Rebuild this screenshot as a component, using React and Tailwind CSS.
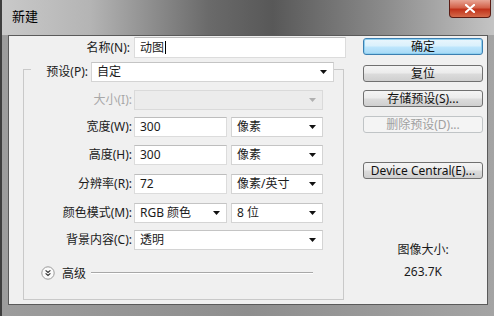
import React from 'react';

const Arrow = ({ disabled }) => (
  <svg width="7" height="4" viewBox="0 0 7 4" className="shrink-0">
    <path d="M0 0h7L3.5 4z" fill={disabled ? '#b0b0b0' : '#111'} />
  </svg>
);

function Select({ value, className = '', disabled }) {
  return (
    <div
      className={`h-[20px] flex items-center justify-between pl-[5px] pr-[6px] border ${
        disabled ? 'bg-[#ececec] border-[#dadada]' : 'bg-white border-[#d4d4d4] border-t-[#c4c4c4]'
      } ${className}`}
    >
      <span>{value}</span>
      <Arrow disabled={disabled} />
    </div>
  );
}

function Input({ value, className = '', caret }) {
  return (
    <div
      className={`h-[20px] flex items-center pl-[5px] bg-white border border-[#dcdcdc] border-t-[#bdbdbd] ${className}`}
    >
      <span>{value}</span>
      {caret && <span className="w-px h-[13px] bg-black ml-[1px]" />}
    </div>
  );
}

function Row({ label, disabled, children, className = '' }) {
  return (
    <div className={`flex items-center h-[20px] ${className}`}>
      <div className={`w-[110px] pr-[2px] text-right ${disabled ? 'text-[#a8a8a8]' : ''}`}>{label}</div>
      <div className="flex items-center gap-[4px]">{children}</div>
    </div>
  );
}

function Button({ children, primary, disabled, className = '' }) {
  let tone =
    'border-[#707070] bg-[linear-gradient(to_bottom,#f4f4f4_0%,#ebebeb_48%,#dcdcdc_52%,#cfcfcf_100%)] text-[#111]';
  if (primary)
    tone =
      'border-[#3c7fb1] bg-[linear-gradient(to_bottom,#eaf6fd_0%,#d9f0fc_48%,#bee6fd_52%,#a7d9f5_100%)] text-[#111] shadow-[inset_0_0_0_1px_#8fd0f0]';
  if (disabled) tone = 'border-[#c0c4c6] bg-[#f4f4f4] text-[#a0a0a0]';
  return (
    <div className={`h-[17px] w-[120px] rounded-[3px] border flex items-center justify-center ${tone} ${className}`}>
      {children}
    </div>
  );
}

export default function App() {
  return (
    <div className="w-[494px] h-[316px] flex flex-col text-[12px] leading-none text-[#1b1b1b] font-['Noto_Sans','Noto_Sans_CJK_SC',sans-serif] bg-[linear-gradient(to_right,#9c9c9c_0%,#8e8e8e_50%,#a4a4a4_100%)] border-l-2 border-[#3e3e3e] overflow-hidden">
      {/* Title bar */}
      <div className="h-[35px] shrink-0 flex items-start justify-between bg-[linear-gradient(to_right,#c9c9c9_0%,#b4b4b4_18%,#6a6a6a_42%,#585858_55%,#8c8c8c_78%,#c4c4c4_100%)]">
        <span className="mt-[9px] ml-[10px] text-[13px] text-black font-['Noto_Sans_CJK_SC',sans-serif]">新建</span>
        <div className="w-[42px] h-[18px] mr-[3px] rounded-b-[4px] border border-t-0 border-[#5a1c14] bg-[linear-gradient(to_bottom,#e8a595_0%,#d3624a_45%,#c0321a_55%,#d46a4a_100%)] flex items-center justify-center">
          <svg width="10" height="9" viewBox="0 0 10 9">
            <path d="M1 1l8 7M9 1L1 8" stroke="#fff" strokeWidth="2.2" strokeLinecap="round" />
          </svg>
        </div>
      </div>

      {/* Body */}
      <div className="flex-1 mx-[6px] mb-[11px] border border-[#5a5a5a] bg-[#f0f0f0] flex">
        {/* Left column */}
        <div className="w-[354px] flex flex-col">
          <div className="flex items-center mt-[1px] h-[21px]">
            <div className="w-[125px] pr-[4px] text-right">名称(N):</div>
            <Input value="动图" caret className="w-[212px] h-[21px]" />
          </div>

          {/* Preset group */}
          <div className="ml-[14px] mt-[11px] w-[321px] h-[231px] border border-[#c9c9c9] flex flex-col">
            <div className="-mt-[8px] ml-[7px] w-[303px] flex items-center h-[20px] bg-[#f0f0f0]">
              <div className="flex-1 text-right pr-[3px]">预设(P):</div>
              <Select value="自定" className="w-[243px]" />
            </div>
            <Row label="大小(I):" disabled className="mt-[8px]">
              <Select value="" disabled className="w-[189px]" />
            </Row>
            <Row label="宽度(W):" className="mt-[7px]">
              <Input value="300" className="w-[93px]" />
              <Select value="像素" className="w-[92px]" />
            </Row>
            <Row label="高度(H):" className="mt-[8px]">
              <Input value="300" className="w-[93px]" />
              <Select value="像素" className="w-[92px]" />
            </Row>
            <Row label="分辨率(R):" className="mt-[9px]">
              <Input value="72" className="w-[93px]" />
              <Select value="像素/英寸" className="w-[92px]" />
            </Row>
            <Row label="颜色模式(M):" className="mt-[9px]">
              <Select value="RGB 颜色" className="w-[93px]" />
              <Select value="8 位" className="w-[92px]" />
            </Row>
            <Row label="背景内容(C):" className="mt-[7px]">
              <Select value="透明" className="w-[189px]" />
            </Row>
            <div className="mt-[16px] flex items-center h-[14px]">
              <svg width="14" height="14" viewBox="0 0 14 14" className="ml-[17px]">
                <circle cx="7" cy="7" r="6.2" fill="#fafafa" stroke="#9a9a9a" />
                <path d="M4.6 4.4L7 6.4L9.4 4.4M4.6 7.4L7 9.4L9.4 7.4" fill="none" stroke="#333" strokeWidth="1.2" />
              </svg>
              <span className="ml-[7px] font-['Noto_Sans_CJK_SC',sans-serif]">高级</span>
              <div className="ml-[5px] w-[222px] border-t border-b border-t-[#a8a8a8] border-b-white" />
            </div>
          </div>
        </div>

        {/* Right column */}
        <div className="w-[120px] flex flex-col items-center">
          <Button primary className="mt-[2px]">确定</Button>
          <Button className="mt-[10px]">复位</Button>
          <Button className="mt-[8px]">存储预设(S)...</Button>
          <Button disabled className="mt-[9px]">删除预设(D)...</Button>
          <Button className="mt-[29px]">Device Central(E)...</Button>
          <div className="mt-[65px]">图像大小:</div>
          <div className="mt-[10px]">263.7K</div>
        </div>
      </div>
    </div>
  );
}
